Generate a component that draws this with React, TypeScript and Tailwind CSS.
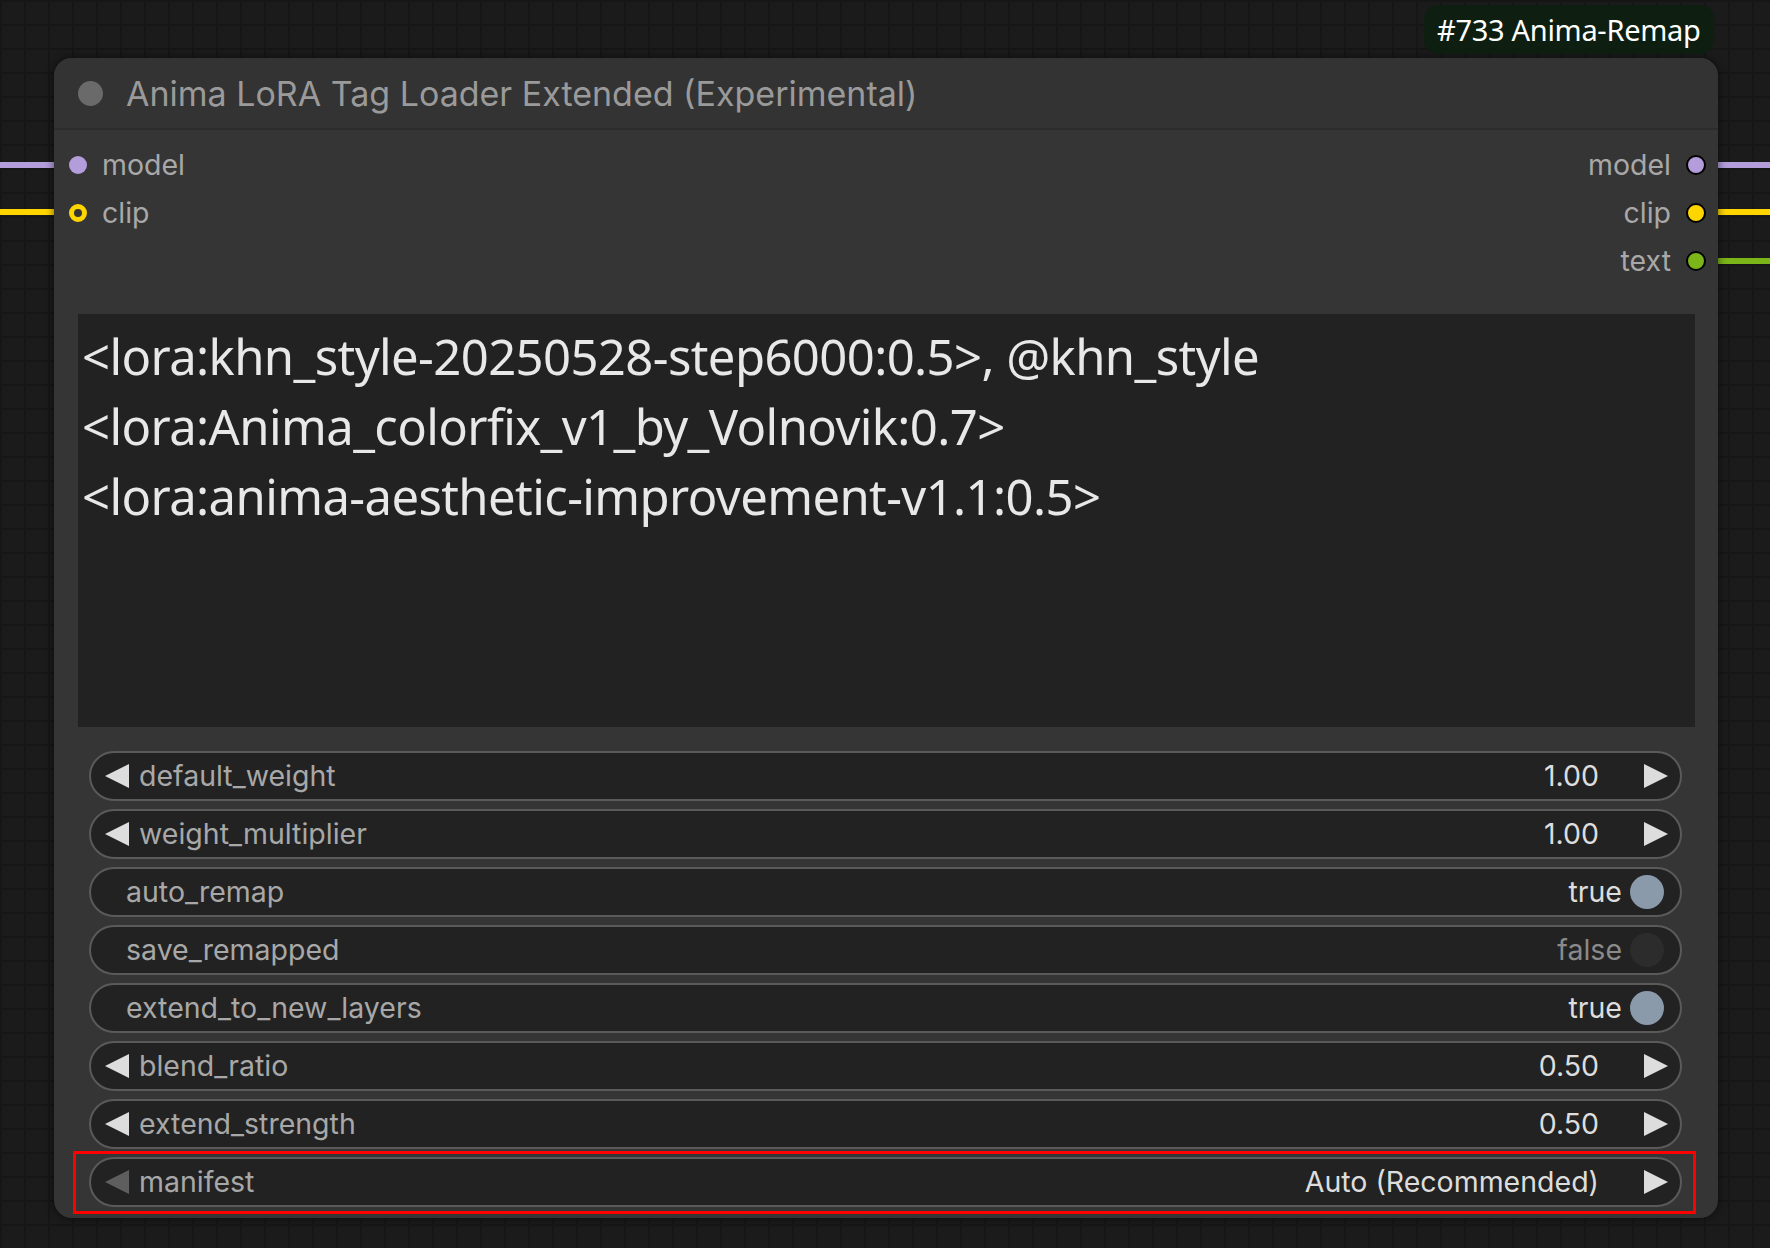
import React from "react";

const F = { fontFamily: "Inter, 'Noto Sans', sans-serif" };

function ArrowL({ dim }: { dim?: boolean }) {
  return (
    <svg width="26" height="26" viewBox="0 0 26 26" className="shrink-0">
      <polygon points="25,1 25,25 1,13" fill={dim ? "#5e5e5e" : "#dddddd"} />
    </svg>
  );
}
function ArrowR() {
  return (
    <svg width="26" height="26" viewBox="0 0 26 26" className="shrink-0">
      <polygon points="1,1 1,25 25,13" fill="#dddddd" />
    </svg>
  );
}

function NumWidget({ label, value, dimLeft }: { label: string; value: string; dimLeft?: boolean }) {
  return (
    <div className="h-[50px] rounded-full border-2 border-[#5a5a5a] bg-[#222222] flex items-center pl-[13px] pr-[11px] text-[28.5px]">
      <ArrowL dim={dimLeft} />
      <span className="ml-[9px] text-[#a8a8a8]">{label}</span>
      <span className="ml-auto text-[#dddddd]">{value}</span>
      <span className="ml-[44px]"><ArrowR /></span>
    </div>
  );
}

function BoolWidget({ label, on }: { label: string; on: boolean }) {
  return (
    <div className="h-[50px] rounded-full border-2 border-[#5a5a5a] bg-[#222222] flex items-center pl-[35px] pr-[16px] text-[28.5px]">
      <span className="text-[#a8a8a8]">{label}</span>
      <span className={"ml-auto " + (on ? "text-[#dddddd]" : "text-[#8a8a8a]")}>{on ? "true" : "false"}</span>
      <span className={"ml-[8px] w-[34px] h-[34px] rounded-full " + (on ? "bg-[#8a9aab]" : "bg-[#2c2c2c]")} />
    </div>
  );
}

export default function App() {
  return (
    <div
      className="relative w-[1770px] h-[1248px] overflow-hidden bg-[#1b1b1b] bg-[linear-gradient(#161616_2px,transparent_2px),linear-gradient(90deg,#161616_2px,transparent_2px)] bg-[length:24px_24px]"
      style={F}
    >
      {/* wires */}
      <div className="absolute left-0 top-[162px] w-[56px] h-[6px] bg-[#b39ddb]" />
      <div className="absolute left-0 top-[209px] w-[56px] h-[6px] bg-[#ffd500]" />
      <div className="absolute right-0 top-[162px] w-[54px] h-[6px] bg-[#b39ddb]" />
      <div className="absolute right-0 top-[209px] w-[54px] h-[6px] bg-[#ffd500]" />
      <div className="absolute right-0 top-[258px] w-[54px] h-[6px] bg-[#7cb518]" />

      {/* tag */}
      <div className="absolute left-[1424px] top-[5px] h-[49px] px-[13px] rounded-[14px] bg-[#0e1f11] flex items-center text-white text-[29px]" style={{ fontFamily: "'Noto Sans', sans-serif", letterSpacing: "-0.3px" }}>
        #733 Anima-Remap
      </div>

      <div className="relative ml-[54px] mt-[58px] w-[1664px] rounded-[18px] bg-[#353535] shadow-[0_0_8px_rgba(0,0,0,0.6)]">
        {/* title */}
        <div className="h-[72px] flex items-center border-b-2 border-[#2c2c2c] rounded-t-[18px] bg-[#333333]">
          <span className="ml-[24px] w-[25px] h-[25px] rounded-full bg-[#6a6a6a]" />
          <span className="ml-[23px] text-[34px] text-[#9a9a9a]">Anima LoRA Tag Loader Extended (Experimental)</span>
        </div>

        {/* slots */}
        <div className="pt-[11px] text-[28.5px] text-[#a8a8a8]">
          <div className="h-[48px] flex items-center">
            <span className="ml-[15px] w-[18px] h-[18px] rounded-full bg-[#b39ddb]" />
            <span className="ml-[15px]">model</span>
            <span className="ml-auto">model</span>
            <span className="ml-[15px] mr-[12px] w-[20px] h-[20px] rounded-full bg-[#b39ddb] border-2 border-black" />
          </div>
          <div className="h-[48px] flex items-center">
            <span className="ml-[15px] w-[18px] h-[18px] rounded-full border-[5px] border-[#ffd500] bg-[#353535]" />
            <span className="ml-[15px]">clip</span>
            <span className="ml-auto">clip</span>
            <span className="ml-[15px] mr-[12px] w-[20px] h-[20px] rounded-full bg-[#ffd500] border-2 border-black" />
          </div>
          <div className="h-[48px] flex items-center">
            <span className="ml-auto">text</span>
            <span className="ml-[15px] mr-[12px] w-[20px] h-[20px] rounded-full bg-[#7cb518] border-2 border-black" />
          </div>
        </div>

        {/* textarea */}
        <div className="mt-[29px] mx-[24px] mr-[23px] h-[413px] bg-[#222222] pt-[7px] pl-[4px] text-[49px] leading-[70px] text-[#e8e8e8]" style={{ fontFamily: "'Noto Sans', sans-serif", letterSpacing: "-0.6px" }}>
          <div>&lt;lora:khn_style-20250528-step6000:0.5&gt;, @khn_style</div>
          <div>&lt;lora:Anima_colorfix_v1_by_Volnovik:0.7&gt;</div>
          <div>&lt;lora:anima-aesthetic-improvement-v1.1:0.5&gt;</div>
        </div>

        {/* widgets */}
        <div className="mt-[24px] ml-[35px] mr-[36px] pb-[11px] flex flex-col gap-[8px]">
          <NumWidget label="default_weight" value="1.00" />
          <NumWidget label="weight_multiplier" value="1.00" />
          <BoolWidget label="auto_remap" on />
          <BoolWidget label="save_remapped" on={false} />
          <BoolWidget label="extend_to_new_layers" on />
          <NumWidget label="blend_ratio" value="0.50" />
          <NumWidget label="extend_strength" value="0.50" />
          <div className="relative">
            <NumWidget label="manifest" value="Auto (Recommended)" dimLeft />
            <div className="absolute left-[-16px] right-[-14px] top-[-6px] bottom-[-7px] border-[3px] border-[#ff0000] pointer-events-none" />
          </div>
        </div>
      </div>
    </div>
  );
}
